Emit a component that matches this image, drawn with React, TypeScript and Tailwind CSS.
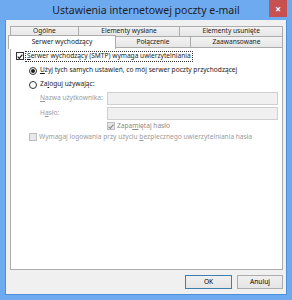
import React from "react";

const Check = ({ color = "#1a1a1a" }: { color?: string }) => (
  <svg width="7" height="7" viewBox="0 0 7 7" className="block">
    <path d="M0.8 3.6 L2.7 5.6 L6.2 1.2" fill="none" stroke={color} strokeWidth="1.4" />
  </svg>
);

function Tab({ label, w }: { label: string; w: string }) {
  return (
    <div
      className={`${w} h-[11px] bg-gradient-to-b from-[#f3f3f3] to-[#e6e6e6] border border-[#acacac] -ml-px first:ml-0 flex items-center justify-center`}
    >
      <span className="text-[6.6px] leading-none text-[#1a1a1a] whitespace-nowrap">{label}</span>
    </div>
  );
}

export default function App() {
  return (
    <div className="w-[292px] h-[300px] bg-[#6eaaf0] flex flex-col font-['Noto_Sans',sans-serif] overflow-hidden">
      <div className="h-[20px] relative flex items-center justify-center">
        <span className="text-[10.5px] text-[#1e1e1e] leading-none mt-[1px]">Ustawienia internetowej poczty e-mail</span>
        <div className="absolute right-[5px] top-0 w-[18px] h-[17px] bg-[#c75050] flex items-center justify-center">
          <span className="text-white text-[10px] leading-none font-bold">×</span>
        </div>
      </div>
      <div className="mx-[5px] mb-[5px] flex-1 bg-[#f0f0f0] border border-[#4f8ed8] border-t-0 flex flex-col">
        <div className="pt-[6px] pl-[4px] pr-[3px] flex flex-col">
          <div className="flex">
            <Tab label="Ogólne" w="w-[69px]" />
            <Tab label="Elementy wysłane" w="w-[103px]" />
            <Tab label="Elementy usunięte" w="w-[104px]" />
          </div>
          <div className="flex -mt-px">
            <div className="-ml-[2px] w-[108px] h-[14px] -mt-[1px] bg-white border border-b-0 border-[#acacac] flex items-center justify-center relative z-10 -mb-px">
              <span className="text-[6.6px] leading-none text-[#1a1a1a] whitespace-nowrap">Serwer wychodzący</span>
            </div>
            <div className="w-[76px] h-[12px] bg-gradient-to-b from-[#f3f3f3] to-[#e6e6e6] border border-[#acacac] -ml-px flex items-center justify-center">
              <span className="text-[6.6px] leading-none text-[#1a1a1a]">Połączenie</span>
            </div>
            <div className="w-[93px] h-[12px] bg-gradient-to-b from-[#f3f3f3] to-[#e6e6e6] border border-[#acacac] -ml-px flex items-center justify-center">
              <span className="text-[6.6px] leading-none text-[#1a1a1a]">Zaawansowane</span>
            </div>
          </div>
          <div className="h-[223px] bg-white border border-[#acacac] -mt-px text-[6.6px] leading-none text-[#1a1a1a] whitespace-nowrap flex flex-col pt-[3px] pl-[5px]">
            <div className="flex items-center gap-[1px]">
              <div className="w-[8px] h-[8px] border border-[#333] bg-white flex items-center justify-center">
                <Check />
              </div>
              <span className="border border-dotted border-[#333] px-[1px] py-[1px]">
                <span className="underline">S</span>erwer wychodzący (SMTP) wymaga uwierzytelniania
              </span>
            </div>
            <div className="flex flex-col pl-[13px] mt-[4px]">
              <div className="flex items-center gap-[3px] h-[10px]">
                <div className="w-[8px] h-[8px] rounded-full border border-[#333] bg-white flex items-center justify-center">
                  <div className="w-[4px] h-[4px] rounded-full bg-[#1a1a1a]" />
                </div>
                <span><span className="underline">U</span>żyj tych samych ustawień, co mój serwer poczty przychodzącej</span>
              </div>
              <div className="flex items-center gap-[3px] h-[10px] mt-[4px]">
                <div className="w-[8px] h-[8px] rounded-full border border-[#333] bg-white" />
                <span>Za<span className="underline">l</span>oguj używając:</span>
              </div>
              <div className="flex flex-col pl-[11px] mt-[2px] text-[#9b9b9b]">
                <div className="flex items-center h-[13px]">
                  <span className="w-[67px]"><span className="underline">N</span>azwa użytkownika:</span>
                  <div className="w-[171px] h-[13px] bg-[#f0f0f0] border border-[#cfcfcf]" />
                </div>
                <div className="flex items-center h-[13px] mt-[2px]">
                  <span className="w-[67px]">H<span className="underline">a</span>sło:</span>
                  <div className="w-[171px] h-[13px] bg-[#f0f0f0] border border-[#cfcfcf]" />
                </div>
                <div className="flex items-center gap-[2px] pl-[67px] mt-[2px] h-[9px]">
                  <div className="w-[8px] h-[8px] border border-[#bcbcbc] bg-[#e8e8e8] flex items-center justify-center">
                    <Check color="#8d8d8d" />
                  </div>
                  <span className="text-[#8a8a8a]">Zapa<span className="underline">m</span>iętaj hasło</span>
                </div>
              </div>
              <div className="flex items-center gap-[2px] mt-[2px] h-[9px] text-[#9b9b9b]">
                <div className="w-[8px] h-[8px] border border-[#bcbcbc] bg-[#e8e8e8]" />
                <span>Wymagaj logowania przy użyciu <span className="underline">b</span>ezpiecznego uwierzytelniania hasła</span>
              </div>
            </div>
          </div>
        </div>
        <div className="flex justify-end gap-[5px] mt-[5px] pr-[3px]">
          <div className="w-[47px] h-[14px] bg-gradient-to-b from-[#f0f0f0] to-[#e5e5e5] border border-[#3c7fb1] flex items-center justify-center text-[6.6px] leading-none">OK</div>
          <div className="w-[46px] h-[14px] bg-gradient-to-b from-[#f0f0f0] to-[#e5e5e5] border border-[#acacac] flex items-center justify-center text-[6.6px] leading-none">Anuluj</div>
        </div>
      </div>
    </div>
  );
}
